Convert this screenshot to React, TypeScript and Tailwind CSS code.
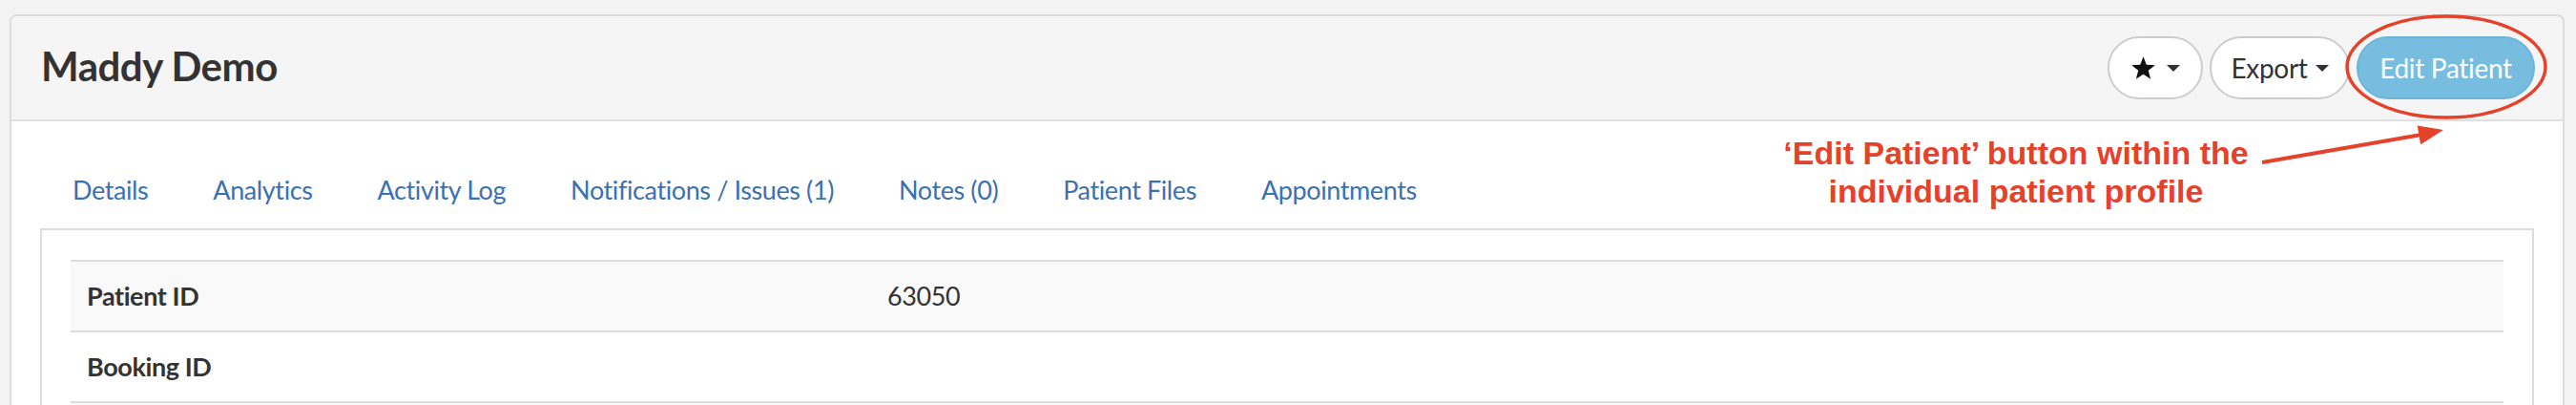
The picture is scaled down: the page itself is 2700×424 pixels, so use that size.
import React from "react";

const tabs = [
  "Details",
  "Analytics",
  "Activity Log",
  "Notifications / Issues (1)",
  "Notes (0)",
  "Patient Files",
  "Appointments",
];

const rows = [
  { label: "Patient ID", value: "63050" },
  { label: "Booking ID", value: "" },
  { label: "", value: "" },
];

const Caret: React.FC = () => (
  <span className="inline-block w-0 h-0 border-x-[7px] border-x-transparent border-t-[7px] border-t-[#333]" />
);

const App: React.FC = () => {
  return (
    <div className="relative w-[2700px] h-[424px] overflow-hidden bg-[#f3f3f3] pt-[15px] pl-[10px] pr-[12px] font-['Lato',sans-serif] text-[#333]">
      <div className="rounded-t-[8px] border-2 border-b-0 border-[#dcdcdc] bg-white">
        {/* panel header */}
        <div className="flex items-center justify-between h-[110px] bg-[#f5f5f5] border-b-2 border-[#e0e0e0] rounded-t-[6px] pl-[31px] pr-[29px]">
          <h1 className="text-[42px] font-bold leading-none tracking-[-0.5px] -mt-[4px]">Maddy Demo</h1>
          <div className="flex items-center gap-[7px]">
            <button className="flex items-center justify-center gap-[11px] w-[100px] h-[66px] rounded-full border-2 border-[#ccc] bg-white">
              <svg width="27" height="27" viewBox="0 0 24 24">
                <polygon
                  points="12,1 14.9,8.6 23,9 16.7,14.1 18.8,22 12,17.5 5.2,22 7.3,14.1 1,9 9.1,8.6"
                  fill="#111"
                />
              </svg>
              <Caret />
            </button>
            <button className="flex items-center justify-center gap-[8px] w-[147px] h-[66px] rounded-full border-2 border-[#ccc] bg-white text-[28px] tracking-[-0.3px]">
              <span>Export</span>
              <Caret />
            </button>
            <button className="flex items-center justify-center w-[187px] h-[66px] rounded-full border-2 border-[#6cb5d8] bg-[#76bddf] text-white text-[28px] tracking-[-0.3px]">
              Edit Patient
            </button>
          </div>
        </div>

        {/* panel body */}
        <div className="px-[30px] pt-[32px]">
          <nav className="flex h-[80px]">
            {tabs.map((t) => (
              <a key={t} className="flex items-center px-[34px] text-[27px] tracking-[-0.4px] text-[#3a71b4] whitespace-nowrap">
                {t}
              </a>
            ))}
          </nav>
          <div className="border-2 border-b-0 border-[#dddddd] px-[30px] pt-[31px] h-[300px]">
            <table className="w-full border-collapse text-[27px] tracking-[-0.4px]">
              <tbody>
                {rows.map((r, i) => (
                  <tr key={i} className={i % 2 === 0 ? "bg-[#f9f9f9]" : "bg-white"}>
                    <td className="w-[850px] h-[74px] border-t-2 border-[#dddddd] pl-[17px] font-bold">
                      {r.label}
                    </td>
                    <td className="h-[74px] border-t-2 border-[#dddddd] pl-[6px]">{r.value}</td>
                  </tr>
                ))}
              </tbody>
            </table>
          </div>
        </div>
      </div>

      {/* annotation overlay */}
      <svg className="absolute left-0 top-0 pointer-events-none" width="2700" height="424">
        <ellipse cx="2564" cy="70" rx="104" ry="53" fill="none" stroke="#e5412b" strokeWidth="3.5" />
        <line x1="2371" y1="170" x2="2538" y2="141" stroke="#e5412b" strokeWidth="4" />
        <polygon points="2561,136 2533.7,131.6 2537.1,151.3" fill="#e5412b" />
      </svg>
      <div className="absolute left-[1813px] top-[140px] w-[600px] text-center text-[34px] leading-[40px] font-bold text-[#e5412b] font-['Liberation_Sans_Narrow','Liberation_Sans',sans-serif]">
        ‘Edit Patient’ button within the
        <br />
        individual patient profile
      </div>
    </div>
  );
};

export default App;
